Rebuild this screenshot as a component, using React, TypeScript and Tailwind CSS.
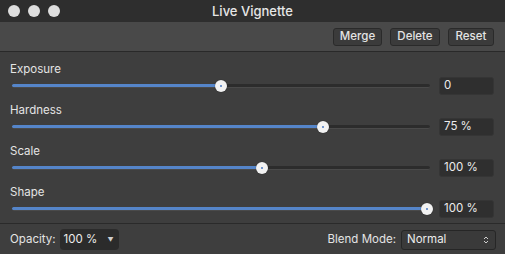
import React from "react";

const font = { fontFamily: "Inter, 'Liberation Sans', sans-serif" };

function Slider({ label, value, pos }: { label: string; value: string; pos: number }) {
  return (
    <div className="flex flex-col">
      <div className="h-[14px] pl-[10px] flex items-center text-[11.5px] text-[#e4e4e4]">{label}</div>
      <div className="h-[18px] flex items-center pl-[12px] pr-[11px]">
        <div className="relative w-[418px] h-[18px] flex items-center">
          <div className="w-full h-[4px] rounded-full bg-[#2c2c2c] border-b border-[#4a4a4a]" />
          <div
            className="absolute left-0 top-[7px] h-[3px] rounded-l-full bg-[#5585c9]"
            style={{ width: pos }}
          />
          <div
            className="absolute top-[3px] w-[12px] h-[12px] rounded-full bg-[#f2f2f2] shadow-[0_0_1px_rgba(0,0,0,0.6)] flex items-center justify-center"
            style={{ left: pos - 6 }}
          >
            <div className="w-[2px] h-[2px] rounded-full bg-[#4a78c0]" />
          </div>
        </div>
        <div className="ml-[9px] w-[55px] h-[18px] rounded-[3px] bg-[#2f2f2f] border border-[#353535] flex items-center pl-[4px] text-[11.5px] text-[#ececec]">
          {value}
        </div>
      </div>
    </div>
  );
}

export default function App() {
  return (
    <div className="w-[505px] h-[254px] bg-[#3e3e3e] flex flex-col overflow-hidden" style={font}>
      <div className="h-[22px] bg-[#2e2e2e] grid grid-cols-[1fr_auto_1fr] items-center">
        <div className="flex items-center gap-[8px] pl-[8px]">
          <div className="w-[12px] h-[12px] rounded-full bg-[#dedede]" />
          <div className="w-[12px] h-[12px] rounded-full bg-[#dedede]" />
          <div className="w-[12px] h-[12px] rounded-full bg-[#dedede]" />
        </div>
        <div className="text-[13px] font-medium text-[#e6e6e6] leading-none">Live Vignette</div>
        <div />
      </div>
      <div className="h-[30px] bg-[#494949] border-b border-[#292929] flex items-center justify-end gap-[8px] pr-[11px]">
        <button className="w-[49px] h-[18px] rounded-[3px] bg-[#3b3b3b] border border-[#2a2a2a] text-[11.5px] font-medium text-[#e4e4e4] leading-none">Merge</button>
        <button className="w-[50px] h-[18px] rounded-[3px] bg-[#3b3b3b] border border-[#2a2a2a] text-[11.5px] font-medium text-[#e4e4e4] leading-none">Delete</button>
        <button className="w-[46px] h-[18px] rounded-[3px] bg-[#3b3b3b] border border-[#2a2a2a] text-[11.5px] font-medium text-[#e4e4e4] leading-none">Reset</button>
      </div>
      <div className="flex flex-col gap-[9px] pt-[11px] h-[171px]">
        <Slider label="Exposure" value="0" pos={209} />
        <Slider label="Hardness" value="75 %" pos={311} />
        <Slider label="Scale" value="100 %" pos={250} />
        <Slider label="Shape" value="100 %" pos={415} />
      </div>
      <div className="flex-1 border-t border-[#2a2a2a] flex items-center px-[10px] pt-[1px]">
        <span className="text-[11.5px] text-[#e4e4e4]">Opacity:</span>
        <div className="ml-[4px] w-[59px] h-[21px] rounded-[4px] bg-[#2b2b2b] flex items-center justify-between pl-[4px] pr-[5px] text-[11.5px] text-[#ececec]">
          <span>100 %</span>
          <span className="text-[6px] text-[#cfcfcf]">▼</span>
        </div>
        <div className="flex-1" />
        <span className="text-[11.5px] text-[#e4e4e4]">Blend Mode:</span>
        <div className="ml-[5px] mr-[-1px] w-[95px] h-[20px] rounded-[3px] bg-[#3a3a3a] border border-[#262626] flex items-center justify-between pl-[5px] pr-[6px] text-[11.5px] text-[#ececec]">
          <span>Normal</span>
          <svg width="6" height="10" viewBox="0 0 6 10">
            <path d="M1 4 L3 2 L5 4" fill="none" stroke="#cfcfcf" strokeWidth="1" />
            <path d="M1 6 L3 8 L5 6" fill="none" stroke="#cfcfcf" strokeWidth="1" />
          </svg>
        </div>
      </div>
    </div>
  );
}
